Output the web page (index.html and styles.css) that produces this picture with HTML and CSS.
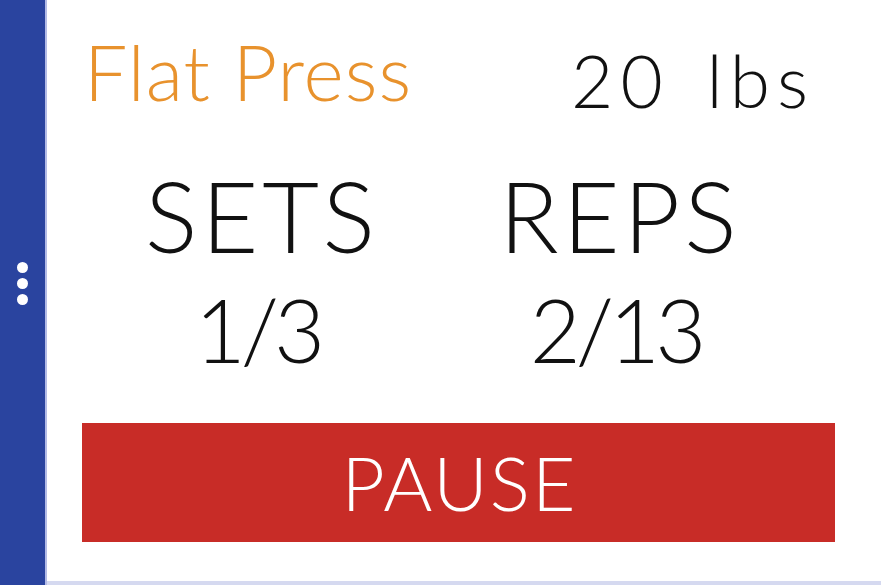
FILE: index.html
```html
<!DOCTYPE html>
<html lang="en">
<head>
<meta charset="utf-8">
<title>Flat Press</title>
<link rel="stylesheet" href="styles.css">
</head>
<body>
<div class="screen">
  <aside class="side">
    <span class="dot"></span>
    <span class="dot"></span>
    <span class="dot"></span>
  </aside>
  <main class="panel">
    <header class="head">
      <h1 class="title">Flat Press</h1>
      <div class="weight">20 lbs</div>
    </header>
    <section class="stats">
      <div class="stat">
        <div class="label">SETS</div>
        <div class="value">1/3</div>
      </div>
      <div class="stat">
        <div class="label">REPS</div>
        <div class="value">2/13</div>
      </div>
    </section>
    <button class="pause" type="button">PAUSE</button>
  </main>
</div>
</body>
</html>
```

FILE: styles.css
```css
html, body {
  margin: 0;
  padding: 0;
  background: #ffffff;
}

body {
  font-family: Lato, "Open Sans", sans-serif;
  font-weight: 300;
  color: #111111;
}

.screen {
  display: flex;
  width: 881px;
  height: 585px;
  overflow: hidden;
}

.side {
  width: 45px;
  flex: none;
  background: #2a449f;
  border-right: 2px solid #b3bbe6;
  display: flex;
  flex-direction: column;
  align-items: center;
  justify-content: center;
  gap: 5px;
  padding-bottom: 19px;
  box-sizing: content-box;
}

.dot {
  width: 11px;
  height: 11px;
  border-radius: 50%;
  background: #ffffff;
}

.panel {
  flex: 1;
  display: flex;
  flex-direction: column;
  padding-top: 33px;
  border-bottom: 4px solid #d5d9f0;
  box-sizing: border-box;
}

.head {
  display: flex;
  justify-content: space-between;
  align-items: flex-start;
  padding: 0 66px 0 37px;
}

.title {
  margin: 0;
  font-size: 77px;
  line-height: 1;
  font-weight: 300;
  letter-spacing: 1px;
  color: #e8922d;
}

.weight {
  margin-top: 11px;
  font-size: 73px;
  line-height: 1;
  letter-spacing: 7px;
  word-spacing: 10px;
}

.stats {
  display: grid;
  grid-template-columns: 358px 358px;
  margin: 49px 0 0 34px;
}

.stat {
  display: flex;
  flex-direction: column;
  align-items: center;
}

.label {
  font-size: 98px;
  line-height: 1;
  letter-spacing: 4px;
  margin-right: -4px;
}

.value {
  margin-top: 21px;
  font-size: 88px;
  line-height: 1;
  letter-spacing: -5px;
  margin-right: 5px;
}

.pause {
  margin: 50px 0 0 35px;
  width: 753px;
  height: 119px;
  border: none;
  padding: 0 0 0 2px;
  background: #c82c27;
  color: #ffffff;
  font-family: Lato, "Open Sans", sans-serif;
  font-weight: 300;
  font-size: 75px;
  line-height: 1;
  letter-spacing: 2px;
}
```
